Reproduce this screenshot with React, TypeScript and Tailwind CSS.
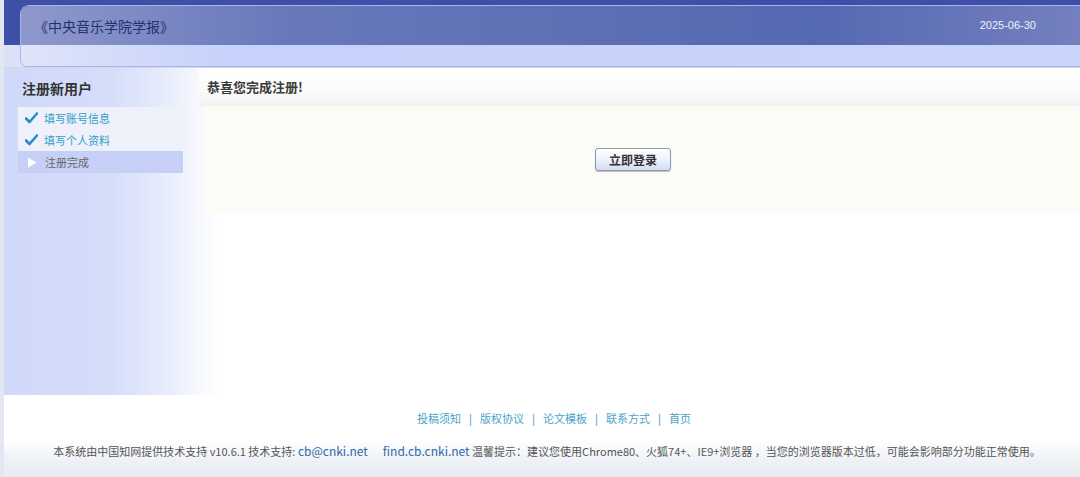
import React from "react";

const FONT = '"Noto Sans CJK SC", "Noto Sans", sans-serif';

function Check() {
  return (
    <svg width="13" height="12" viewBox="0 0 13 12" className="shrink-0">
      <path d="M1 6.5 L4.5 10 L12 1.5" fill="none" stroke="#2a8cc0" strokeWidth="2.6" strokeLinecap="round" strokeLinejoin="round" />
    </svg>
  );
}

function Play() {
  return (
    <svg width="10" height="11" viewBox="0 0 10 11" className="shrink-0">
      <path d="M1 0.5 L9.5 5.5 L1 10.5 Z" fill="#ffffff" />
    </svg>
  );
}

const steps = [
  { label: "填写账号信息", done: true },
  { label: "填写个人资料", done: true },
  { label: "注册完成", done: false },
];

const links = ["投稿须知", "版权协议", "论文模板", "联系方式", "首页"];

export default function App() {
  return (
    <div
      className="w-full h-[477px] overflow-hidden bg-white border-l-[4px] border-[#e3e7f1] flex flex-col"
      style={{ fontFamily: FONT }}
    >
      {/* header */}
      <header className="h-[68px] shrink-0 border-b border-[#d2d7e6] bg-[linear-gradient(#3e4fa7_0,#3e4fa7_45px,#dbe1f6_45px)] pt-[5px] pl-[16px]">
        <div className="h-full flex flex-col rounded-tl-[9px] rounded-bl-[7px] border border-r-0 border-[#a9b4ec] overflow-hidden">
          <div className="h-[39px] flex items-center justify-between pl-[13px] pr-[44px] bg-[linear-gradient(90deg,#8e98cc_0%,#6878bb_25%,#5f70b5_50%,#5568b2_75%,#7480bf_100%)]">
            <span className="text-[14px] leading-none text-[#25306d]">《中央音乐学院学报》</span>
            <span className="text-[11px] leading-none text-[#eef1ff]" style={{ fontFamily: '"Liberation Sans", Arial, sans-serif' }}>
              2025-06-30
            </span>
          </div>
          <div className="flex-1 bg-[linear-gradient(90deg,#dfe4f8_0%,#c6d2fb_20%,#c9d5fb_100%)]" />
        </div>
      </header>

      {/* body */}
      <main className="h-[327px] shrink-0 flex">
        <aside className="w-[195px] shrink-0 bg-[linear-gradient(90deg,#d0d9f8_0%,#d5ddf9_55%,#e9eefc_85%,#f8f9fe_100%)] pt-[10px] pl-[14px]">
          <h2 className="text-[14px] font-bold text-[#333] leading-[20px] pl-[4px]">注册新用户</h2>
          <ul className="mt-[9px] w-[165px]">
            {steps.map((s) => (
              <li
                key={s.label}
                className={
                  s.done
                    ? "h-[22px] flex items-center gap-[6px] pl-[7px] bg-[#eef1fa] text-[11px] text-[#2f9ec8]"
                    : "h-[22px] flex items-center gap-[8px] pl-[9px] bg-[#c6d0f6] text-[11px] text-[#666]"
                }
              >
                {s.done ? <Check /> : <Play />}
                <span>{s.label}</span>
              </li>
            ))}
          </ul>
        </aside>

        <section className="flex-1 flex flex-col bg-[linear-gradient(90deg,#f6f8fe_0px,#ffffff_20px)]">
          <div className="h-[38px] flex items-center pl-[8px] bg-[linear-gradient(#ffffff_0%,#fbfbfb_60%,#f2f2f2_100%)]">
            <h1 className="text-[13px] font-bold text-[#3b3b3b]">恭喜您完成注册!</h1>
          </div>
          <div className="h-[107px] ml-[5px] bg-[#fcfcf7] flex items-center justify-center pr-[18px]">
            <button className="h-[23px] px-[13px] rounded-[3px] border border-[#8f96a8] bg-[linear-gradient(#ffffff_0%,#eef2fc_50%,#d3dcf5_100%)] text-[12px] font-bold text-[#333] shadow-[0_1px_1px_rgba(0,0,0,0.25)] leading-none">
              立即登录
            </button>
          </div>
        </section>
      </main>

      {/* footer */}
      <footer className="flex-1 flex flex-col items-center bg-[linear-gradient(#ffffff_0%,#ffffff_55%,#eef1f6_80%,#e6eaf2_100%)] pl-[10px]">
        <nav className="mt-[15px] ml-[14px] flex items-center text-[11px] text-[#48a4c9] leading-[16px]">
          {links.map((l, i) => (
            <React.Fragment key={l}>
              {i > 0 && <span className="mx-[8px] text-[#3b8fc4]">|</span>}
              <span>{l}</span>
            </React.Fragment>
          ))}
        </nav>
        <p className="mt-[17px] text-[11px] text-[#555] leading-[16px] whitespace-nowrap">
          本系统由中国知网提供技术支持 v10.6.1 技术支持:{" "}
          <span className="text-[12px] text-[#2f68a6]">cb@cnki.net</span>
          <span className="inline-block w-[15px]" />
          <span className="text-[12px] text-[#2f68a6]">find.cb.cnki.net</span> 温馨提示：建议您使用Chrome80、火狐74+、IE9+浏览器 ，当您的浏览器版本过低，可能会影响部分功能正常使用。
        </p>
      </footer>
    </div>
  );
}
